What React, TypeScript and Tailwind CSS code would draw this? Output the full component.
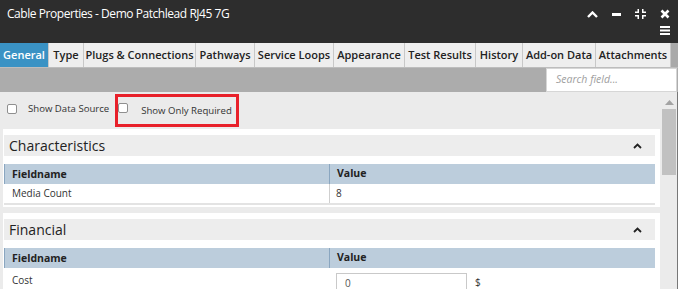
const tabs = [
  { label: "General", w: "w-[49px]", active: true },
  { label: "Type", w: "w-[35px]" },
  { label: "Plugs & Connections", w: "w-[112px]" },
  { label: "Pathways", w: "w-[59px]" },
  { label: "Service Loops", w: "w-[79px]" },
  { label: "Appearance", w: "w-[71px]" },
  { label: "Test Results", w: "w-[71px]" },
  { label: "History", w: "w-[47px]" },
  { label: "Add-on Data", w: "w-[73px]" },
  { label: "Attachments", w: "w-[75px]" },
];

function Chevron() {
  return (
    <svg width="9" height="6" viewBox="0 0 9 6" className="text-[#222]">
      <path d="M1 5 L4.5 1.5 L8 5" fill="none" stroke="currentColor" strokeWidth="1.8" />
    </svg>
  );
}

function Section({ title, children }: { title: string; children: React.ReactNode }) {
  return (
    <div className="ml-[3px] w-[657px] bg-white pl-[1px] pr-[5px] pt-[6px] pb-[2px]">
      <div className="flex h-[21px] items-center justify-between bg-[#ededed] pl-[5px] pr-[13px]">
        <span className="text-[14px] leading-none text-[#222]">{title}</span>
        <Chevron />
      </div>
      <div className="mt-[8px]">
        <div className="flex h-[20px] items-center border-l border-[#8aa6c0] bg-[#bccddc] text-[10.5px] font-bold text-[#222]">
          <div className="w-[325px] border-r border-[#8aa6c0] pl-[7px] leading-[20px]">Fieldname</div>
          <div className="pl-[7px]">Value</div>
        </div>
        {children}
      </div>
    </div>
  );
}

export default function App() {
  return (
    <div className="flex h-[289px] w-[678px] flex-col overflow-hidden bg-[#ebebeb] font-['Open_Sans',sans-serif]">
      {/* title bar */}
      <div className="flex h-[43px] shrink-0 justify-between bg-[#2d2d2d] pl-[7px] pr-[8px] text-white">
        <div className="pt-[5px] text-[12px] tracking-[-0.45px]">Cable Properties - Demo Patchlead RJ45 7G</div>
        <div className="flex flex-col items-end pt-[9px]">
          <div className="flex items-center gap-[14px]">
            <svg width="11" height="7" viewBox="0 0 11 7">
              <path d="M1 6 L5.5 1.5 L10 6" fill="none" stroke="white" strokeWidth="2.4" />
            </svg>
            <div className="h-[3px] w-[9px] bg-white" />
            <svg width="11" height="10" viewBox="0 0 11 10" fill="white">
              <path d="M2.5 0h1.5v4H0V2.5h2.5z M7 0h1.5v2.5H11V4H7z M0 6h4v4H2.5V7.5H0z M7 6h4v1.5H8.5V10H7z" />
            </svg>
            <svg width="10" height="10" viewBox="0 0 10 10">
              <path d="M1.5 1.5 L8.5 8.5 M8.5 1.5 L1.5 8.5" stroke="white" strokeWidth="2.6" />
            </svg>
          </div>
          <svg width="10" height="9" viewBox="0 0 10 9" fill="white" className="mt-[7px]">
            <rect x="0" y="0" width="10" height="2" />
            <rect x="0" y="3.5" width="10" height="2" />
            <rect x="0" y="7" width="10" height="2" />
          </svg>
        </div>
      </div>

      {/* tabs */}
      <div className="flex h-[25px] shrink-0 border-b border-[#bdbdbd] bg-[#a9a9a9]">
        {tabs.map((t) => (
          <div
            key={t.label}
            className={`${t.w} flex items-center justify-center border-r border-[#c8c8c8] text-[11px] font-semibold ${
              t.active ? "bg-[#3a92c4] text-white" : "bg-[#eeeeee] text-[#222]"
            }`}
          >
            {t.label}
          </div>
        ))}
      </div>

      {/* search band */}
      <div className="flex h-[24px] shrink-0 justify-end bg-[#acacac] pr-[1px]">
        <div className="flex w-[131px] items-center border border-[#d6d6d6] bg-white pl-[9px] text-[10.5px] italic text-[#a0a0a0]">
          Search field...
        </div>
      </div>

      {/* body */}
      <div className="flex min-h-0 flex-1">
        <div className="flex-1">
          <div className="flex h-[37px] items-start pt-[2px] text-[9.6px] text-[#333]">
            <label className="flex items-center pl-[7px] pt-[8px]">
              <span className="h-[10px] w-[10px] rounded-[2px] border border-[#8f8f8f] bg-white" />
              <span className="ml-[11px]">Show Data Source</span>
            </label>
            <label className="ml-[6px] flex h-[33px] w-[124px] items-start border-[3px] border-[#e8202a] pl-[0px] pt-[6px]">
              <span className="h-[10px] w-[10px] rounded-[2px] border border-[#8f8f8f] bg-white" />
              <span className="ml-[13px] mt-[1px]">Show Only Required</span>
            </label>
          </div>

          <Section title="Characteristics">
            <div className="flex h-[21px] items-center border-b-2 border-[#e3e3e3] text-[10px] text-[#333]">
              <div className="w-[326px] border-r border-[#cfcfcf] pl-[8px] leading-[19px]">Media Count</div>
              <div className="pl-[6px]">8</div>
            </div>
          </Section>

          <div className="h-[6px]" />

          <Section title="Financial">
            <div className="flex h-[24px] items-center text-[10px] text-[#333]">
              <div className="w-[326px] pl-[8px]">Cost</div>
              <div className="ml-[6px] mt-[6px] flex h-[20px] w-[131px] items-center border border-[#c9c9c9] pl-[8px] text-[#555]">0</div>
              <div className="ml-[8px] mt-[4px]">$</div>
            </div>
          </Section>
        </div>

        {/* scrollbar */}
        <div className="flex w-[17px] flex-col items-center border-r border-[#777] bg-[#ebebeb] pt-[8px]">
          <svg width="9" height="5" viewBox="0 0 9 5" fill="#a3a3a3">
            <path d="M0 5 L4.5 0 L9 5z" />
          </svg>
          <div className="mt-[4px] h-[66px] w-[14px] bg-[#c1c1c1]" />
        </div>
      </div>
    </div>
  );
}
